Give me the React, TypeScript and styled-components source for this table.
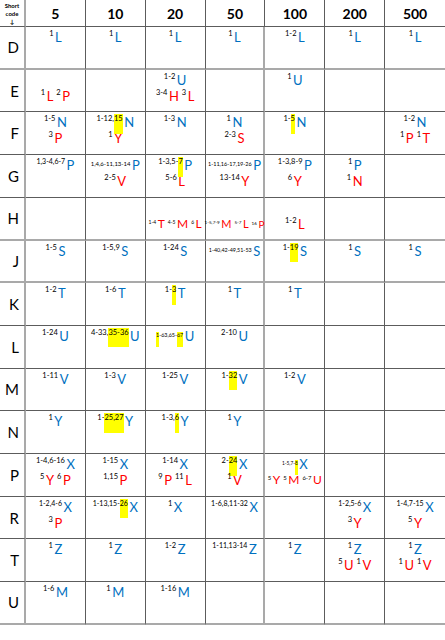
import styled, { createGlobalStyle } from "styled-components";

const GlobalStyle = createGlobalStyle`
  html, body { margin: 0; padding: 0; background: #fff; }
  body { font-family: Lato, "Liberation Sans", sans-serif; color: #000; }
`;

type Tone = "b" | "r";
type Item = { sup: string; l: string; tone: Tone; s?: number; ls?: number };
type Line = Item[];
type CellData = Line[];

const B = (sup: string, l: string, s?: number, ls?: number): Item => ({ sup, l, tone: "b", s, ls });
const R = (sup: string, l: string, s?: number, ls?: number): Item => ({ sup, l, tone: "r", s, ls });

const COLS = ["5", "10", "20", "50", "100", "200", "500"];

// [n] in a superscript marks the part that is highlighted yellow
const ROWS: { code: string; cells: CellData[]; line?: "gray" }[] = [
  { code: "D", line: "gray", cells: [[[B("1", "L")]], [[B("1", "L")]], [[B("1", "L")]], [[B("1", "L")]], [[B("1-2", "L")]], [[B("1", "L")]], [[B("1", "L")]]] },
  { code: "E", cells: [[[], [R("1", "L"), R("2", "P")]], [], [[B("1-2", "U")], [R("3-4", "H"), R("3", "L")]], [], [[B("1", "U")]], [], []] },
  {
    code: "F",
    cells: [
      [[B("1-5", "N")], [R("3", "P")]],
      [[B("1-12,[15]", "N")], [R("1", "Y")]],
      [[B("1-3", "N")]],
      [[B("1", "N")], [R("2-3", "S")]],
      [[B("1-[5]", "N")]],
      [],
      [[B("1-2", "N")], [R("1", "P"), R("1", "T")]],
    ],
  },
  {
    code: "G",
    cells: [
      [[B("1,3-4,6-7", "P", 7)]],
      [[B("1,4,6-11,13-14", "P", 6)], [R("2-5", "V")]],
      [[B("1-3,5-[7]", "P")], [R("5-6", "L")]],
      [[B("1-11,16-17,19-26", "P", 5.5)], [R("13-14", "Y")]],
      [[B("1-3,8-9", "P")], [R("6", "Y")]],
      [[B("1", "P")], [R("1", "N")]],
      [],
    ],
  },
  {
    code: "H",
    line: "gray",
    cells: [
      [],
      [],
      [[], [R("1-4", "T", 5, 12), R("4-5", "M", 5, 12), R("6", "L", 5, 12)]],
      [[], [R("1-5,7-9", "M", 4.6, 11), R("5-7", "L", 4.6, 11), R("16", "P", 4.6, 10)]],
      [[], [R("1-2", "L")]],
      [],
      [],
    ],
  },
  {
    code: "J",
    line: "gray",
    cells: [
      [[B("1-5", "S")]],
      [[B("1-5,9", "S")]],
      [[B("1-24", "S")]],
      [[B("1-40,42-49,51-53", "S", 5.4)]],
      [[B("1-[19]", "S")]],
      [[B("1", "S")]],
      [[B("1", "S")]],
    ],
  },
  { code: "K", cells: [[[B("1-2", "T")]], [[B("1-6", "T")]], [[B("1-[3]", "T")]], [[B("1", "T")]], [[B("1", "T")]], [], []] },
  { code: "L", cells: [[[B("1-24", "U")]], [[B("4-33,[35-36]", "U")]], [[B("[1]-63,65-[67]", "U", 5.4)]], [[B("2-10", "U")]], [], [], []] },
  { code: "M", cells: [[[B("1-11", "V")]], [[B("1-3", "V")]], [[B("1-25", "V")]], [[B("1-[32]", "V")]], [[B("1-2", "V")]], [], []] },
  { code: "N", cells: [[[B("1", "Y")]], [[B("1-[25,27]", "Y")]], [[B("1-3,[6]", "Y")]], [[B("1", "Y")]], [], [], []] },
  {
    code: "P",
    cells: [
      [[B("1-4,6-16", "X")], [R("5", "Y"), R("6", "P")]],
      [[B("1-15", "X")], [R("1,15", "P")]],
      [[B("1-14", "X")], [R("9", "P"), R("11", "L")]],
      [[B("2-[24]", "X")], [R("1", "V")]],
      [[B("1-5,7-[8]", "X", 4.8)], [R("5", "Y", 6, 12), R("5", "M", 6, 12), R("6-7", "U", 6, 12)]],
      [],
      [],
    ],
  },
  {
    code: "R",
    cells: [
      [[B("1-2,4-6", "X", 7)], [R("3", "P")]],
      [[B("1-13,15-[26]", "X", 7)]],
      [[B("1", "X")]],
      [[B("1-6,8,11-32", "X", 7)]],
      [],
      [[B("1-2,5-6", "X", 7)], [R("3", "Y")]],
      [[B("1-4,7-15", "X", 7)], [R("5", "Y")]],
    ],
  },
  {
    code: "T",
    cells: [
      [[B("1", "Z")]],
      [[B("1", "Z")]],
      [[B("1-2", "Z")]],
      [[B("1-11,13-14", "Z", 7)]],
      [[B("1", "Z")]],
      [[B("1", "Z")], [R("5", "U"), R("1", "V")]],
      [[B("1", "Z")], [R("1", "U"), R("1", "V")]],
    ],
  },
  { code: "U", line: "gray", cells: [[[B("1-6", "M")]], [[B("1", "M")]], [[B("1-16", "M")]], [], [], [], []] },
];

const DARK = "#5c5c5c";
const GRAY = "#a9a9a9";

const Table = styled.div`
  display: grid;
  grid-template-columns: 26px repeat(7, 1fr);
  grid-template-rows: 27px repeat(14, 42.71px);
  width: 445px;
`;

const Cell = styled.div<{ $col: number; $gray?: boolean; $header?: boolean }>`
  box-sizing: border-box;
  min-width: 0;
  border-bottom: ${(p) => (p.$gray ? `2px solid ${GRAY}` : `1px solid ${DARK}`)};
  border-right: ${(p) =>
    p.$col === 7
      ? "none"
      : p.$col === 0 || (p.$col === 4 && !p.$header)
      ? `2px solid ${GRAY}`
      : `1px solid ${DARK}`};
`;

const Corner = styled(Cell)`
  font-size: 6px;
  font-weight: 700;
  line-height: 8px;
  text-align: center;
  padding-top: 2px;
`;

const HeadCell = styled(Cell)`
  display: flex;
  align-items: center;
  justify-content: center;
  font-size: 14px;
  font-weight: 700;
`;

const CodeCell = styled(Cell)`
  display: flex;
  align-items: center;
  justify-content: flex-end;
  padding-right: 5px;
  font-size: 15px;
`;

const BodyCell = styled(Cell)`
  display: flex;
  flex-direction: column;
  align-items: center;
  padding-top: 4px;
`;

const LineRow = styled.div`
  display: flex;
  align-items: baseline;
  justify-content: center;
  gap: 3px;
  height: 16px;
  white-space: nowrap;
`;

const Entry = styled.span`
  display: inline-flex;
  align-items: baseline;
  gap: 1.5px;
`;

const Sup = styled.span<{ $size: number; $raise: number }>`
  display: inline-block;
  position: relative;
  top: -${(p) => p.$raise}px;
  font-size: ${(p) => p.$size}px;
  line-height: 1;
  color: #000;
`;

const Mark = styled.span<{ $depth: number }>`
  display: inline-block;
  background: #ffff00;
  padding-top: 1px;
  padding-bottom: ${(p) => p.$depth}px;
  margin-bottom: -${(p) => p.$depth}px;
  vertical-align: baseline;
  line-height: 1;
`;

const Letter = styled.span<{ $tone: Tone; $size: number }>`
  display: inline-block;
  font-size: ${(p) => p.$size}px;
  line-height: 1;
  color: ${(p) => (p.$tone === "b" ? "#0070c0" : "#ff0000")};
`;

function SupText({ text, size, letterSize }: { text: string; size: number; letterSize: number }) {
  const raise = size >= 6.5 ? Math.round(letterSize * 0.45) : Math.round(letterSize * 0.32);
  const parts = text.split(/(\[[^\]]+\])/).filter(Boolean);
  return (
    <Sup $size={size} $raise={raise}>
      {parts.map((part, i) =>
        part.startsWith("[") ? (
          <Mark key={i} $depth={raise + 5}>
            {part.slice(1, -1)}
          </Mark>
        ) : (
          <span key={i}>{part}</span>
        )
      )}
    </Sup>
  );
}

export default function App() {
  return (
    <>
      <GlobalStyle />
      <Table>
        <Corner $col={0} $header>
          Short
          <br />
          code
          <br />↓
        </Corner>
        {COLS.map((c, i) => (
          <HeadCell key={c} $col={i + 1} $header>
            {c}
          </HeadCell>
        ))}
        {ROWS.map((row) => (
          <>
            <CodeCell key={row.code} $col={0} $gray={row.line === "gray"}>
              {row.code}
            </CodeCell>
            {row.cells.map((cell, ci) => (
              <BodyCell key={row.code + ci} $col={ci + 1} $gray={row.line === "gray"}>
                {cell.map((line, li) => (
                  <LineRow key={li}>
                    {line.map((it, k) => (
                      <Entry key={k}>
                        <SupText text={it.sup} size={it.s ?? 7.5} letterSize={it.ls ?? 13} />
                        <Letter $tone={it.tone} $size={it.ls ?? 13}>
                          {it.l}
                        </Letter>
                      </Entry>
                    ))}
                  </LineRow>
                ))}
              </BodyCell>
            ))}
          </>
        ))}
      </Table>
    </>
  );
}
